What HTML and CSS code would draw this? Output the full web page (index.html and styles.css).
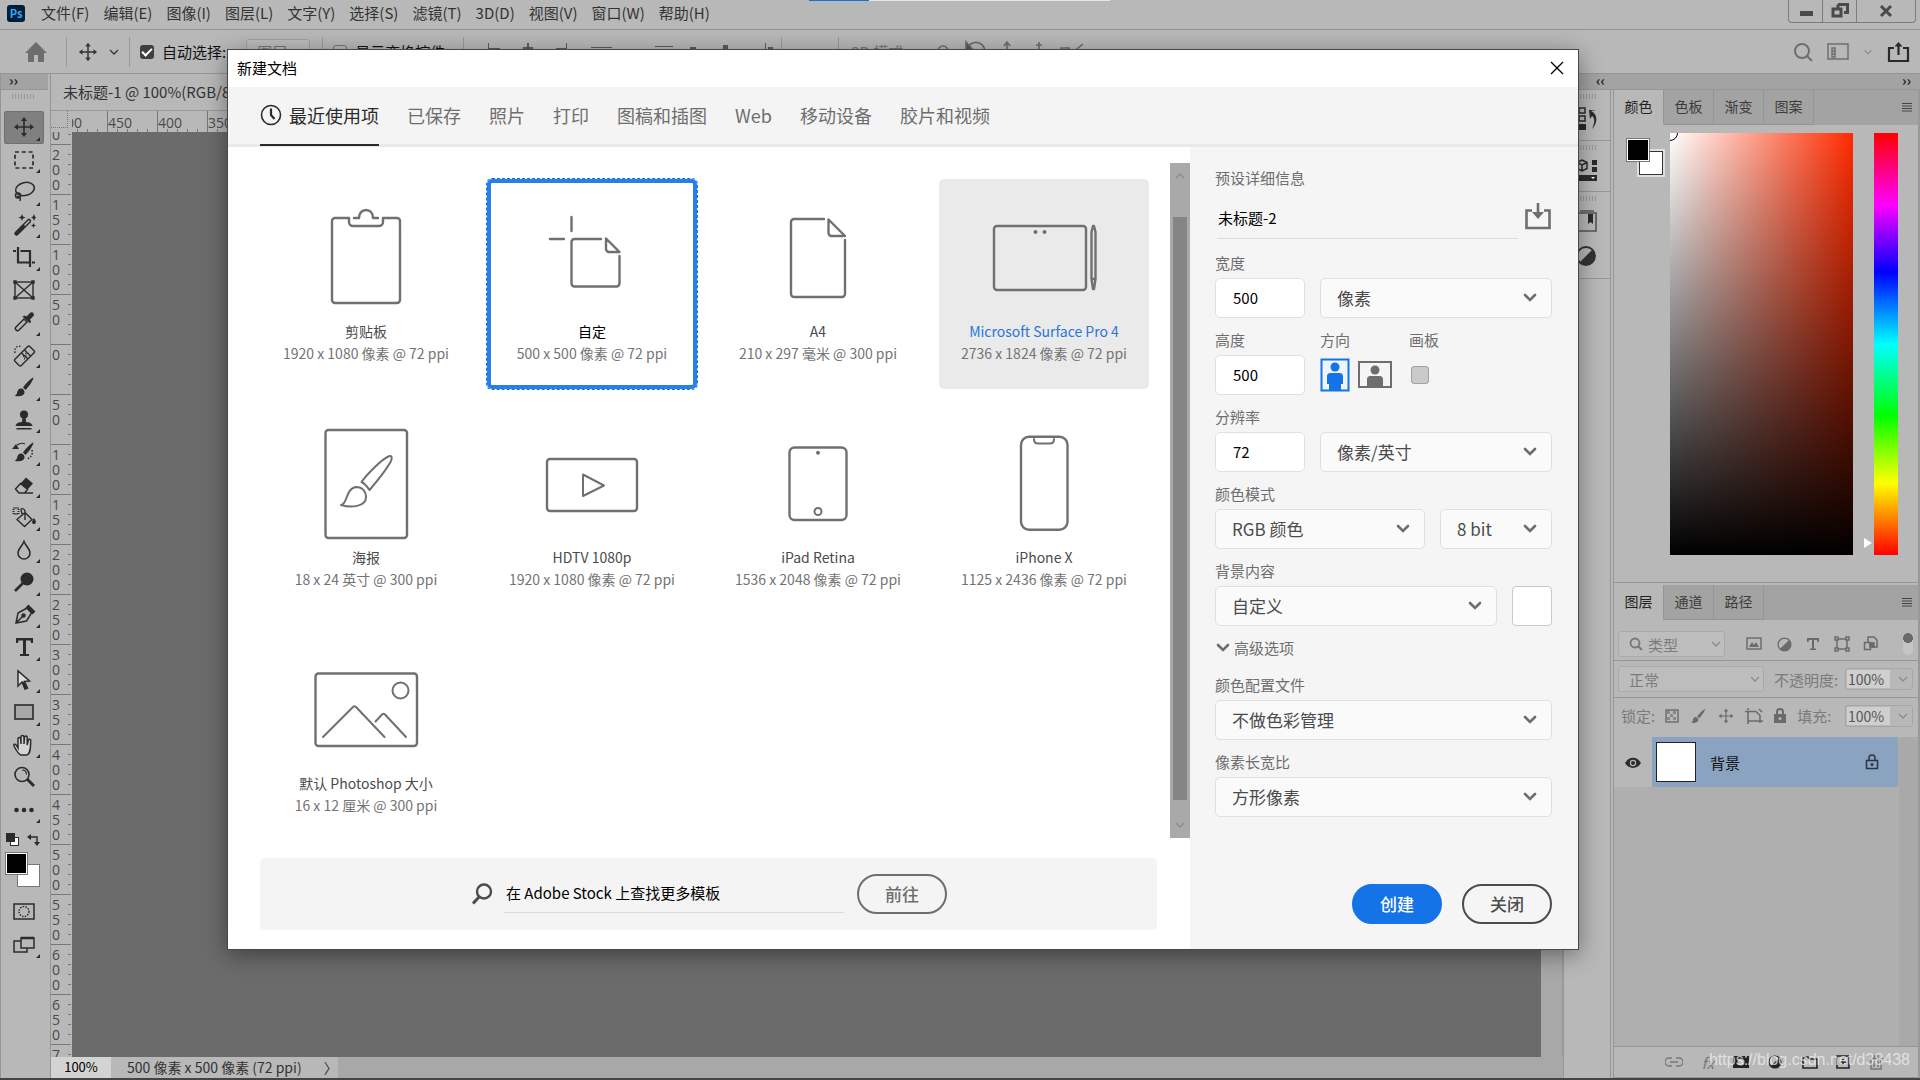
FILE: index.html
```
<!DOCTYPE html>
<html lang="zh-CN">
<head>
  <meta charset="UTF-8">
  <meta name="viewport" content="width=device-width, initial-scale=1.0">
  <title>Photoshop</title>
  <link rel="stylesheet" href="styles.css">
</head>
<body>
  <svg class="defs" aria-hidden="true">
    <symbol id="chev" viewBox="0 0 14 10"><path d="M2 2l5 5 5-5" fill="none" stroke="currentColor" stroke-width="2.6" stroke-linecap="round"/></symbol>
    <symbol id="thin" viewBox="0 0 14 10"><path d="M3 3l4 4 4-4" fill="none" stroke="currentColor" stroke-width="1.3"/></symbol>
    <symbol id="move" viewBox="0 0 24 24"><path d="M12 5v14M5 12h14" stroke="currentColor" stroke-width="1.6"/><path d="M12 2l3 4H9zM12 22l3-4H9zM2 12l4-3v6zM22 12l-4-3v6z" fill="currentColor"/></symbol>
    <symbol id="brush" viewBox="0 0 24 24"><path d="M21.500 2.500c-3 1-8.500 7-10.500 10l2.500 2.500C16.500 12 21 6 21.500 2.500zM10 13.500c-3-.5-4.500 1.500-5 4.500-.3 1.600-1.500 2.400-2.500 2.700 3 1 9 1 10-3 .2-1.700-.8-3.200-2.500-4.200z" fill="currentColor"/></symbol>
    <symbol id="half" viewBox="0 0 24 24"><circle cx="12" cy="12" r="9" fill="none" stroke="currentColor" stroke-width="1.8"/><path d="M18.400 5.600A9 9 0 0 1 5.600 18.400z" fill="currentColor"/></symbol>
    <symbol id="lines" viewBox="0 0 12 10"><path d="M1 1.500h10M1 4h10M1 6.500h10M1 9h10" stroke="currentColor" stroke-width="1"/></symbol>
  </svg>

  <div class="app">
    <div class="load-strip"><i></i></div>
    <header class="menubar">
      <div class="logo">Ps</div>
      <nav class="menus">
        <button>文件(F)</button>
        <button>编辑(E)</button>
        <button>图像(I)</button>
        <button>图层(L)</button>
        <button>文字(Y)</button>
        <button>选择(S)</button>
        <button>滤镜(T)</button>
        <button>3D(D)</button>
        <button>视图(V)</button>
        <button>窗口(W)</button>
        <button>帮助(H)</button>
      </nav>
      <div class="win-buttons">
        <button aria-label="最小化"><svg width="16" height="16"><rect x="2" y="8" width="13" height="5" fill="#4a4a4a"/></svg></button>
        <button aria-label="还原"><svg width="18" height="16"><path d="M7 1.500h9.500v8H13M7 1.500V5" fill="none" stroke="#4a4a4a" stroke-width="3"/><rect x="2" y="6" width="8" height="7" fill="none" stroke="#4a4a4a" stroke-width="3"/></svg></button>
        <button class="win-close" aria-label="关闭窗口"><svg width="16" height="14"><path d="M3 2l10 10M13 2L3 12" stroke="#4a4a4a" stroke-width="3"/></svg></button>
      </div>
    </header>

    <div class="options">
      <svg class="home" width="24" height="22"><path d="M12 1L1 12h3v9h6v-7h4v7h6v-9h3z" fill="#6d6d6d"/></svg>
      <span class="sep"></span>
      <svg width="22" height="22"><use href="#move"/></svg>
      <svg width="14" height="10"><use href="#thin"/></svg>
      <span class="sep"></span>
      <input type="checkbox" id="autoselect" class="check" checked>
      <label for="autoselect" class="auto-label">自动选择:</label>
      <select class="group" aria-label="选择对象"><option>图层</option></select>
      <span class="sep"></span>
      <input type="checkbox" id="transform" class="check off">
      <label for="transform">显示变换控件</label>
      <span class="sep"></span>
      <svg class="aligns" width="290" height="24" fill="#5c5c5c" stroke="none">
        <path d="M5 3h1v18H5zM6 8h11v3H6zM44 3h2v18h-2zM40 7h10v4H40zM83 3h1v18h-1zM73 8h10v3H73zM108 7h21v1h-21zM172 6h18v1h-18zM174 9h5v10h-5zM183 9h5v8h-5zM207 7h6v12h-6zM203 10h16v1h-16zM240 5h5v14h-5zM282 3h1v18h-1zM293 3h1v18h-1zM285 7h5v12h-5z"/>
      </svg>
      <span class="sep"></span>
      <span class="sep far"></span>
      <span class="mode">3D 模式:</span>
      <svg class="orbits" width="160" height="24" fill="none" stroke="#6d6d6d" stroke-width="1.600">
        <circle cx="20" cy="11" r="5"/><path d="M44 10a9 9 0 1 1 4 9"/><path d="M43 2v8h7z" fill="#555"/><circle cx="52" cy="13" r="3"/><path d="M84 2v20M75 12h18M81 6l3-4 3 4M116 2v20M107 12h18M113 5h6M138 8h8v8h-8zM150 12l10-8"/>
      </svg>
      <div class="options-end">
        <svg width="22" height="22" fill="none" stroke="#6f6f6f" stroke-width="2"><circle cx="10" cy="10" r="7"/><path d="M15 15l5 5"/></svg>
        <svg width="22" height="18" fill="none" stroke="#6f6f6f" stroke-width="1.500"><rect x="1" y="1" width="20" height="15"/><path d="M5 5h3v9H5zM5 8h3M5 11h3"/></svg>
        <svg class="dim" width="12" height="10"><use href="#thin"/></svg>
        <svg width="24" height="22" fill="none" stroke="#2a2a2a" stroke-width="2.200"><path d="M7 7H2v13h19V7h-5M11.500 14V3"/><path d="M7.500 5.500l4-4.500 4 4.500z" fill="#2a2a2a" stroke="none"/></svg>
      </div>
    </div>

    <div class="workspace">
      <aside class="tools">
        <div class="band">››</div>
        <div class="grip"></div>
        <div class="tool-list">
          <button class="tool active" aria-label="移动"><svg width="24" height="24"><use href="#move"/></svg></button>
          <button class="tool" aria-label="选框"><svg width="24" height="24"><rect x="3" y="4" width="18" height="16" fill="none" stroke="#2b2b2b" stroke-width="1.700" stroke-dasharray="4 2.800"/></svg></button>
          <button class="tool" aria-label="套索"><svg width="24" height="24" fill="none" stroke="#2b2b2b" stroke-width="1.500"><ellipse cx="13" cy="9" rx="9.500" ry="6.500" transform="rotate(-12 13 9)"/><circle cx="6" cy="15.500" r="2.500"/><path d="M5 16c3 1 4 2.500 3 5"/></svg></button>
          <button class="tool" aria-label="魔棒"><svg width="24" height="24"><path d="M4.500 20.500L17 8" stroke="#2b2b2b" stroke-width="4.500" stroke-linecap="round"/><path d="M13 12l4-4" stroke="#b8b8b8" stroke-width="1.600" stroke-linecap="round"/><path d="M10 1l1 2.500 2.500 1L11 5.500 10 8 9 5.500 6.500 4.500 9 3.500zM22 1l1 2.500 1 1-1 1-1 2.500-1-2.500-2-1 2-1zM21.500 10l.8 1.700 1.700.8-1.700.8-.8 1.700-.8-1.700-1.700-.8 1.700-.8z" fill="#2b2b2b"/></svg></button>
          <button class="tool" aria-label="裁剪"><svg width="24" height="24" fill="none" stroke="#2b2b2b" stroke-width="2.200"><path d="M1 6h3M6 2v15.500h12M8.500 6H18v16M20 17.500h3"/></svg></button>
          <button class="tool plain" aria-label="图框"><svg width="24" height="24" fill="none" stroke="#2b2b2b" stroke-width="1.400"><rect x="3" y="4" width="18" height="16"/><path d="M3 4l18 16M21 4L3 20"/><path d="M2 3h2v2H2zM20 3h2v2h-2zM2 19h2v2H2zM20 19h2v2h-2z" fill="#2b2b2b"/></svg></button>
          <button class="tool" aria-label="吸管"><svg width="24" height="24"><path d="M12 9l3 3-8 8c-2 2-5-1-3-3z" fill="none" stroke="#2b2b2b" stroke-width="1.500"/><path d="M10.500 6.500l2-1 2 1L18 3c2-2 5 1 3.500 3L18 9.500l1 2-1 2z" fill="#2b2b2b"/></svg></button>
          <button class="tool" aria-label="修复画笔"><svg width="24" height="24" fill="none" stroke="#2b2b2b" stroke-width="1.400"><rect x="2" y="8.500" width="21" height="9" rx="1.500" transform="rotate(-45 12.500 13)"/><path d="M9.500 10l6.500 6M12 6.500l6.500 6.500"/><path d="M3 10c-1-6 3-8 7-6" stroke-dasharray="1.500 1.500"/><path d="M11 13h1M13.500 13h1M12 15.500h1M13.500 10.500h1" stroke-width="1.800"/></svg></button>
          <button class="tool" aria-label="画笔"><svg width="24" height="24"><use href="#brush"/></svg></button>
          <button class="tool" aria-label="仿制图章"><svg width="24" height="24" fill="#2b2b2b"><circle cx="12" cy="6.500" r="4"/><path d="M10.500 9h3l.5 5c3 .3 6 1 6.500 4h-17c.5-3 3.500-3.700 6.500-4zM4.500 20h15v1.400h-15z"/></svg></button>
          <button class="tool" aria-label="历史记录画笔"><svg width="24" height="24"><use href="#brush"/><path d="M0 9l4-5 3 5z" fill="#2b2b2b"/><path d="M5 5c3-2 6-2 8-1" fill="none" stroke="#2b2b2b" stroke-width="1.200"/><path d="M20 10c1 5-1 7-5 9" fill="none" stroke="#2b2b2b" stroke-width="1.500" stroke-dasharray="1.500 1.500"/></svg></button>
          <button class="tool" aria-label="橡皮擦"><svg width="24" height="24"><path d="M14 4.500l7 6-5.500 6-7-6z" fill="#2b2b2b"/><path d="M8.500 10.500L3.500 16l3.500 4h5.500l3-3.500zM7 20h14" fill="none" stroke="#2b2b2b" stroke-width="1.500"/></svg></button>
          <button class="tool" aria-label="油漆桶"><svg width="24" height="24" fill="none" stroke="#2b2b2b" stroke-width="1.400"><path d="M5 14.500l8-7 7 7-7.500 7zM13 15V6c-1-3-4-3-4-1l1 4"/><path d="M22 13c3 4 2 6 0 6s-3-2 0-6z" fill="#2b2b2b" stroke="none"/><rect x="1.500" y="3" width="5" height="6" stroke-dasharray="1 1" stroke-width="2"/></svg></button>
          <button class="tool" aria-label="模糊"><svg width="24" height="24" fill="none" stroke="#2b2b2b" stroke-width="1.600"><path d="M12 3.500c1.500 4 6 7.500 6 11.500a6 6 0 0 1-12 0c0-4 4.500-7.500 6-11.500z"/></svg></button>
          <button class="tool" aria-label="减淡"><svg width="24" height="24"><circle cx="15" cy="9" r="6.500" fill="#2b2b2b"/><path d="M11 13l-8 8" stroke="#2b2b2b" stroke-width="2.600"/></svg></button>
          <button class="tool" aria-label="钢笔"><svg width="24" height="24" fill="none" stroke="#2b2b2b" stroke-width="1.500"><path d="M4 20l2-10 9-5 4.500 5-5 8zM4 20l7-7"/><circle cx="11.500" cy="12.500" r="1.500" fill="#2b2b2b"/><path d="M15 3l7 7" stroke-width="4"/></svg></button>
          <button class="tool" aria-label="文字"><svg width="24" height="24" fill="#2b2b2b"><path d="M4 3h17v5h-2l-.5-2.500H14V19h3v2H8v-2h3V5.500H6.500L6 8H4z"/></svg></button>
          <button class="tool" aria-label="路径选择"><svg width="24" height="24"><path d="M6 3v15l4-4 3 7 2.500-1-3-6.500 5-.5z" fill="#ddd" stroke="#2b2b2b" stroke-width="1.500"/><path d="M11 14l3.500 7" stroke="#2b2b2b" stroke-width="2.500"/></svg></button>
          <button class="tool" aria-label="矩形"><svg width="24" height="24"><rect x="3" y="5" width="18" height="14" fill="#a8a8a8" stroke="#2b2b2b" stroke-width="1.600"/></svg></button>
          <button class="tool" aria-label="抓手"><svg width="24" height="24"><path d="M9 22c-3-1-5-5-7-9-1-2 1.500-2.500 2.500-.5L6 15V6c0-2 2.500-2 2.700 0l.3 5V4c0-2 2.700-2 3 0v7l.5-6.500c.2-2 2.700-2 2.700 0V12l1-4.500c.5-2 2.800-1.500 2.500.5C18.500 13 19 22 14 22z" fill="#d5d5d5" stroke="#2b2b2b" stroke-width="1.500"/></svg></button>
          <button class="tool plain" aria-label="缩放"><svg width="24" height="24" fill="none" stroke="#2b2b2b"><circle cx="10" cy="9.500" r="7" stroke-width="1.600"/><path d="M10 5c3 0 4.500 2 4.500 4.500" stroke-width="1.200"/><path d="M15 14l7 7" stroke-width="3"/></svg></button>
          <button class="tool" aria-label="编辑工具栏"><svg width="24" height="24" fill="#2b2b2b"><circle cx="4.500" cy="12" r="2.300"/><circle cx="12" cy="12" r="2.300"/><circle cx="19.500" cy="12" r="2.300"/></svg></button>
        </div>
        <div class="color-mini">
          <svg width="14" height="14"><rect x="4.500" y="4.500" width="8" height="8" fill="#fff" stroke="#2b2b2b"/><rect width="9" height="9" fill="#2b2b2b"/></svg>
          <svg width="14" height="14"><path d="M3 4h7v7" fill="none" stroke="#2b2b2b" stroke-width="1.400"/><path d="M0 4l4-3v6zM10 13l-3-4h6z" fill="#2b2b2b"/></svg>
        </div>
        <div class="swatches"><i class="back"></i><i class="front"></i></div>
        <button class="tool mask" aria-label="快速蒙版"><svg width="24" height="20" fill="none" stroke="#2b2b2b"><rect x="2" y="2" width="20" height="15" stroke-width="1.500"/><circle cx="12" cy="9.500" r="5" stroke-width="1.400" stroke-dasharray="1.500 1.200"/></svg></button>
        <button class="tool screen" aria-label="屏幕模式"><svg width="24" height="20" fill="#b8b8b8" stroke="#2b2b2b" stroke-width="1.500"><rect x="2" y="6" width="13" height="11"/><rect x="9" y="3" width="13" height="10"/><path d="M9 3h13" stroke-width="2.500"/></svg></button>
      </aside>

      <main class="doc">
        <div class="doc-tabs"><span>未标题-1 @ 100%(RGB/8</span></div>
        <div class="ruler-row">
          <div class="ruler-corner"></div>
          <div class="ruler-h"><span>500</span><span>450</span><span>400</span><span>350</span></div>
        </div>
        <div class="canvas-row">
          <div class="ruler-v">
            <span class="first">250</span><span>200</span><span>150</span><span>100</span><span>50</span><span>0</span><span>50</span><span>100</span><span>150</span><span>200</span><span>250</span><span>300</span><span>350</span><span>400</span><span>450</span><span>500</span><span>550</span><span>600</span><span>650</span><span>7</span>
          </div>
          <div class="canvas"></div>
          <div class="vscroll"></div>
        </div>
        <div class="status">
          <span class="zoom">100%</span>
          <span class="size">500 像素 x 500 像素 (72 ppi)</span>
          <span class="more">〉</span>
          <div class="hscroll"></div>
        </div>
      </main>

      <div class="right">
        <div class="band right-band"><span>‹‹</span><span>››</span></div>
        <div class="right-cols">
          <aside class="dock">
            <div class="dock-cell">
              <div class="grip"></div>
              <svg width="26" height="24"><path d="M5 1h6v5H5zM5 9h6v5H5z" fill="none" stroke="#2b2b2b" stroke-width="1.500"/><path d="M4 17h8v6H4z" fill="#2b2b2b"/><path d="M17 4c7 3 7 12 1 18 3-7 3-11 0-13l-2 3-1-9h7z" fill="#2b2b2b"/></svg>
            </div>
            <div class="dock-cell">
              <div class="grip"></div>
              <svg width="26" height="24"><path d="M8 2l5 2.500v6L8 13l-5-2.500v-6zM3 4.500L8 7l5-2.500M8 7v6" fill="none" stroke="#2b2b2b" stroke-width="1.500"/><path d="M18 2h5v5h-5zM18 9h5v5h-5zM2 17h21v6H2z" fill="#2b2b2b"/><path d="M17 19h4l-2 2z" fill="#fff"/></svg>
            </div>
            <div class="dock-cell tall">
              <div class="grip"></div>
              <svg width="26" height="24"><path d="M4 4h18v18H4zM6 2h14" fill="none" stroke="#555" stroke-width="1.600"/><path d="M14 5h5v10l-2.500-2-2.500 2z" fill="#2b2b2b"/></svg>
              <svg class="contrast" width="24" height="24"><use href="#half"/></svg>
            </div>
          </aside>

          <div class="panels">
            <section class="panel color-panel">
              <div class="tabs">
                <button class="tab on">颜色</button>
                <button class="tab">色板</button>
                <button class="tab">渐变</button>
                <button class="tab">图案</button>
                <svg width="12" height="10"><use href="#lines"/></svg>
              </div>
              <div class="picker">
                <div class="swatches"><i class="back"></i><i class="front"></i></div>
                <div class="field"><i class="ring"></i></div>
                <div class="hue"><i class="marker"></i></div>
              </div>
            </section>

            <section class="panel layers-panel">
              <div class="tabs">
                <button class="tab on">图层</button>
                <button class="tab">通道</button>
                <button class="tab">路径</button>
                <svg width="12" height="10"><use href="#lines"/></svg>
              </div>
              <div class="row filter-row">
                <div class="mini-select filter">
                  <svg class="find" width="14" height="14" fill="none" stroke="#777" stroke-width="1.800"><circle cx="6" cy="6" r="4.500"/><path d="M9 9l4 4"/></svg>
                  <select aria-label="图层过滤"><option>类型</option></select>
                  <svg class="arrow" width="14" height="10"><use href="#thin"/></svg>
                </div>
                <div class="filter-icons">
                  <svg width="16" height="14"><rect x="1" y="1" width="14" height="11" fill="none" stroke="#6a6a6a" stroke-width="1.400"/><path d="M3 10l3-5 2 3 2-3 3 5z" fill="#6a6a6a"/></svg>
                  <svg width="17" height="17"><use href="#half"/></svg>
                  <svg width="14" height="14"><path d="M1 1h12v4h-1.500L11 3H8v8.500h2V13H4v-1.500h2V3H3l-.5 2H1z" fill="#6a6a6a"/></svg>
                  <svg width="16" height="16" fill="none" stroke="#6a6a6a" stroke-width="1.500"><rect x="3" y="3" width="10" height="10"/><path d="M1 1h3v3H1zM12 1h3v3h-3zM1 12h3v3H1zM12 12h3v3h-3z" fill="#b8b8b8"/></svg>
                  <svg width="16" height="16" fill="none" stroke="#6a6a6a" stroke-width="1.500"><path d="M5 6V1h6l3 3v7H9M1.500 6.500h6v7h-6zM8 8h3"/><path d="M7 7h4v4H7z" fill="#6a6a6a"/></svg>
                </div>
                <span class="toggle"></span>
              </div>
              <div class="row">
                <div class="mini-select blend">
                  <select aria-label="混合模式"><option>正常</option></select>
                  <svg class="arrow" width="14" height="10"><use href="#thin"/></svg>
                </div>
                <label for="opacity">不透明度:</label>
                <div class="num"><input id="opacity" type="text" value="100%"><svg width="14" height="10"><use href="#thin"/></svg></div>
              </div>
              <div class="row lock-row">
                <span class="lock-label">锁定:</span>
                <svg width="14" height="14"><rect x="1" y="1" width="12" height="12" fill="none" stroke="#6a6a6a" stroke-width="1.400"/><path d="M2 2h3v3H2zM8 2h3v3H8zM5 5h3v3H5zM2 8h3v3H2zM8 8h3v3H8z" fill="#888"/></svg>
                <svg width="18" height="18"><use href="#brush"/></svg>
                <svg width="18" height="18"><use href="#move"/></svg>
                <svg width="18" height="16" fill="none" stroke="#6a6a6a" stroke-width="1.500"><path d="M3 0v2M0 3.500h11l4 4V13H3V3.500M15 15v-2h3M3 13v3M14 1l3 3"/></svg>
                <svg width="14" height="16"><path d="M1 6h12v9H1z" fill="#6a6a6a"/><path d="M4 7V4a3 3 0 0 1 6 0v3" fill="none" stroke="#6a6a6a" stroke-width="2"/><circle cx="7" cy="10.500" r="1.500" fill="#b8b8b8"/></svg>
                <label for="fill">填充:</label>
                <div class="num"><input id="fill" type="text" value="100%"><svg width="14" height="10"><use href="#thin"/></svg></div>
              </div>
              <div class="layer-list">
                <div class="layer">
                  <div class="eye"><svg width="16" height="12"><path d="M0 6c4-7 12-7 16 0-4 6.500-12 6.500-16 0z" fill="#2b2b2b"/><circle cx="8" cy="6" r="3.200" fill="#b8b8b8"/><circle cx="8" cy="6" r="2" fill="#2b2b2b"/></svg></div>
                  <div class="layer-body">
                    <i class="thumb"></i>
                    <span>背景</span>
                    <svg width="14" height="16" fill="none" stroke="#2b3644" stroke-width="1.500"><rect x="1.500" y="6.500" width="11" height="8"/><path d="M4 6.500V4a3 3 0 0 1 6 0v2.500"/><circle cx="7" cy="10.500" r=".8"/></svg>
                  </div>
                </div>
              </div>
              <div class="layer-actions">
                <svg width="18" height="10" fill="none" stroke="#777" stroke-width="1.500"><path d="M7 1H4a4 4 0 0 0 0 8h3M11 1h3a4 4 0 0 1 0 8h-3M5 5h8"/></svg>
                <span class="fx">fx</span>
                <svg width="16" height="12"><path d="M0 0h16v12H0z" fill="#222"/><circle cx="8" cy="6" r="3.500" fill="#b8b8b8"/></svg>
                <svg class="dark" width="16" height="16"><use href="#half"/></svg>
                <svg width="16" height="13" fill="none" stroke="#222" stroke-width="1.600"><path d="M1 12V1h5l1.500 2H15v9z"/></svg>
                <svg width="14" height="14" fill="none" stroke="#222" stroke-width="1.600"><path d="M1 1h12v12H1zM7 4v6M4 7h6"/></svg>
                <svg width="14" height="15" fill="none" stroke="#777" stroke-width="1.500"><path d="M0 3.500h14M2 4v10h10V4M5 3V1h4v2M5 6v6M9 6v6"/></svg>
              </div>
            </section>
          </div>
        </div>
      </div>
    </div>
    <footer class="edge"></footer>
    <div class="watermark">https://blog.csdn.net/d38438</div>

    <div class="dialog" role="dialog" aria-label="新建文档">
      <div class="dialog-title">
        <span>新建文档</span>
        <button aria-label="关闭对话框"><svg width="14" height="14"><path d="M1 1l12 12M13 1L1 13" stroke="#000" stroke-width="1.300"/></svg></button>
      </div>
      <nav class="dialog-tabs">
        <button class="current"><svg width="22" height="22" fill="none" stroke="#2b2b2b"><circle cx="11" cy="11" r="9.500" stroke-width="1.600"/><path d="M11 4.500V11l3.500 4" stroke-width="2.200"/></svg>最近使用项</button>
        <button>已保存</button>
        <button>照片</button>
        <button>打印</button>
        <button>图稿和插图</button>
        <button>Web</button>
        <button>移动设备</button>
        <button>胶片和视频</button>
      </nav>
      <div class="dialog-body">
        <div class="browse">
          <div class="presets-wrap">
            <div class="presets">
              <button class="preset">
                <svg width="210" height="120"><path d="M88 20H74a3 3 0 0 0-3 3v79a3 3 0 0 0 3 3h62a3 3 0 0 0 3-3V23a3 3 0 0 0-3-3h-14v4a4 4 0 0 1-4 4H92a4 4 0 0 1-4-4z"/><path d="M93 20h5c0-5 3-8 7-8s7 3 7 8h5"/></svg>
                <b>剪贴板</b><small>1920 x 1080 像素 @ 72 ppi</small>
              </button>
              <button class="preset selected">
                <svg width="210" height="120"><path d="M84.500 19v14M63 41h14M114 41H87.500a3 3 0 0 0-3 3v41.500a3 3 0 0 0 3 3h42a3 3 0 0 0 3-3V58M119 40.500L132.500 54H122a3 3 0 0 1-3-3z"/></svg>
                <b>自定</b><small>500 x 500 像素 @ 72 ppi</small>
              </button>
              <button class="preset">
                <svg width="210" height="120"><path d="M111 21H81a3 3 0 0 0-3 3v72a3 3 0 0 0 3 3h48a3 3 0 0 0 3-3V42M115.500 21.500L132 38h-13.500a3 3 0 0 1-3-3z"/></svg>
                <b>A4</b><small>210 x 297 毫米 @ 300 ppi</small>
              </button>
              <button class="preset hovered">
                <svg width="210" height="120"><rect x="55" y="28" width="92" height="64" rx="3"/><circle cx="96.500" cy="34" r="2" class="solid"/><circle cx="105.500" cy="34" r="2" class="solid"/><path d="M152.500 34l1.500-6h1l1.500 6v47l-1.500 10h-1l-1.500-10zM152.500 81h4"/></svg>
                <b>Microsoft Surface Pro 4</b><small>2736 x 1824 像素 @ 72 ppi</small>
              </button>
              <button class="preset">
                <svg width="210" height="120"><rect x="64.500" y="6" width="81.500" height="108" rx="3"/><path class="fine" d="M100.500 58c5-7 20-23 28-26 3-.5 2.500 3 1 6-5 9-15 21-21 28-2-3-4-6-8-8zM80 81c7-1 4-16 15-18 7 0 10 5 10 10 0 10-15 11-25 8z"/></svg>
                <b>海报</b><small>18 x 24 英寸 @ 300 ppi</small>
              </button>
              <button class="preset">
                <svg width="210" height="120"><rect x="60" y="35" width="90" height="52" rx="3"/><path class="fine" d="M96 50.500l21 11-21 10.500z"/></svg>
                <b>HDTV 1080p</b><small>1920 x 1080 像素 @ 72 ppi</small>
              </button>
              <button class="preset">
                <svg width="210" height="120"><rect x="76.500" y="23.500" width="57" height="72.500" rx="5"/><circle cx="105" cy="28.700" r="2" class="solid"/><circle cx="105" cy="87.500" r="3.500" class="fine"/></svg>
                <b>iPad Retina</b><small>1536 x 2048 像素 @ 72 ppi</small>
              </button>
              <button class="preset">
                <svg width="210" height="120"><rect x="82" y="12.700" width="46.500" height="93" rx="8"/><path class="fine" d="M95 15c0 3 1 4.500 4 4.500h12c3 0 4-1.500 4-4.500"/></svg>
                <b>iPhone X</b><small>1125 x 2436 像素 @ 72 ppi</small>
              </button>
              <button class="preset">
                <svg width="210" height="120"><rect x="54.500" y="23.500" width="101.500" height="72.500" rx="3"/><circle cx="139.500" cy="40.500" r="8" class="fine"/><path class="fine" d="M62 87l30-30q1.500-1.500 3 0l28.500 30M114.500 71.500l6.500-7q1.500-1.500 3 0L145 87"/></svg>
                <b>默认 Photoshop 大小</b><small>16 x 12 厘米 @ 300 ppi</small>
              </button>
            </div>
            <div class="scrollbar">
              <svg class="up" width="14" height="10"><use href="#thin"/></svg>
              <i class="knob"></i>
              <svg width="14" height="10"><use href="#thin"/></svg>
            </div>
          </div>
          <form class="stock">
            <svg width="24" height="24" fill="none" stroke="#4b4b4b"><circle cx="14" cy="9.500" r="7" stroke-width="2.400"/><path d="M9 15l-6 6.500" stroke-width="3"/></svg>
            <input type="text" aria-label="搜索模板" value="在 Adobe Stock 上查找更多模板">
            <button type="button">前往</button>
          </form>
        </div>

        <form class="details">
          <div class="details-title">预设详细信息</div>
          <div class="name-row">
            <input type="text" aria-label="名称" value="未标题-2">
            <button type="button" aria-label="保存预设"><svg width="28" height="28" fill="none" stroke="#6e6e6e" stroke-width="2.600"><path d="M8 8.500H2.500V26h23V8.500H20M14 1v10"/><path d="M8 10h12l-6 7z" fill="#6e6e6e" stroke="none"/></svg></button>
          </div>
          <div class="fields">
            <div class="line">
              <div class="cell short"><label for="width">宽度</label><input id="width" type="text" value="500"></div>
              <div class="cell wide"><div class="pick"><select aria-label="单位"><option>像素</option></select><svg width="14" height="10"><use href="#chev"/></svg></div></div>
            </div>
            <div class="line">
              <div class="cell short"><label for="height">高度</label><input id="height" type="text" value="500"></div>
              <div class="cell direction"><span>方向</span>
                <div class="ways">
                  <button type="button" aria-label="纵向"><svg width="30" height="34"><rect x="1.500" y="1.500" width="27" height="31" fill="#eef4fc" stroke="#1473e6" stroke-width="2"/><circle cx="15" cy="9" r="4.500" fill="#1473e6"/><path d="M7 19c0-3 1-4 4-4h8c3 0 4 1 4 4v7h-2v7H9v-7H7z" fill="#1473e6"/></svg></button>
                  <button type="button" aria-label="横向"><svg width="34" height="28"><rect x="1" y="1" width="32" height="25" fill="none" stroke="#6e6e6e" stroke-width="2"/><circle cx="17" cy="9" r="4.500" fill="#6e6e6e"/><path d="M9 26v-7c0-3 1-4 4-4h8c3 0 4 1 4 4v7z" fill="#6e6e6e"/></svg></button>
                </div>
              </div>
              <div class="cell artboard"><label for="artboard">画板</label><input id="artboard" type="checkbox"></div>
            </div>
            <div class="line">
              <div class="cell short"><label for="res">分辨率</label><input id="res" type="text" value="72"></div>
              <div class="cell wide"><div class="pick"><select aria-label="分辨率单位"><option>像素/英寸</option></select><svg width="14" height="10"><use href="#chev"/></svg></div></div>
            </div>
            <div class="line">
              <div class="cell wide"><label for="mode">颜色模式</label><div class="pick"><select id="mode"><option>RGB 颜色</option></select><svg width="14" height="10"><use href="#chev"/></svg></div></div>
              <div class="cell bits"><div class="pick"><select aria-label="位深度"><option>8 bit</option></select><svg width="14" height="10"><use href="#chev"/></svg></div></div>
            </div>
            <div class="line">
              <div class="cell wide"><label for="bg">背景内容</label><div class="pick"><select id="bg"><option>自定义</option></select><svg width="14" height="10"><use href="#chev"/></svg></div></div>
              <button type="button" class="bg-color" aria-label="背景颜色"></button>
            </div>
            <button type="button" class="advanced"><svg width="14" height="10"><use href="#chev"/></svg>高级选项</button>
            <div class="cell"><label for="profile">颜色配置文件</label><div class="pick"><select id="profile"><option>不做色彩管理</option></select><svg width="14" height="10"><use href="#chev"/></svg></div></div>
            <div class="cell"><label for="ratio">像素长宽比</label><div class="pick"><select id="ratio"><option>方形像素</option></select><svg width="14" height="10"><use href="#chev"/></svg></div></div>
          </div>
          <div class="actions">
            <button type="button" class="create">创建</button>
            <button type="button" class="close">关闭</button>
          </div>
        </form>
      </div>
    </div>
  </div>
</body>
</html>
```

FILE: styles.css
```
* {
  box-sizing: border-box;
}
body {
  margin: 0;
  background: #b8b8b8;
  color: #333;
  font-family: "Noto Sans CJK SC", sans-serif;
  font-size: 15px;
  overflow: hidden;
}
button {
  padding: 0;
  border: 0;
  background: none;
  font: inherit;
  color: inherit;
}
input, select {
  margin: 0;
  font: inherit;
  color: inherit;
  border-radius: 0;
}
select {
  appearance: none;
}
svg {
  display: block;
  flex: none;
}
.defs {
  position: absolute;
  width: 0;
  height: 0;
}
.app {
  position: relative;
  display: flex;
  flex-direction: column;
  height: 100vh;
}
.load-strip {
  position: absolute;
  top: 0;
  left: 809px;
  width: 301px;
  height: 1px;
  background: #e6e6e6;
}
.load-strip i {
  display: block;
  width: 60px;
  height: 1px;
  background: #0b78d7;
}

/* menu bar */
.menubar {
  display: flex;
  align-items: flex-start;
  height: 30px;
  padding-left: 7px;
  border-bottom: 1px solid #929292;
}
.logo {
  width: 18px;
  height: 17px;
  margin-top: 5px;
  border-radius: 3px;
  background: #001e36;
  color: #31a8ff;
  font-size: 11px;
  font-weight: bold;
  line-height: 16px;
  text-align: center;
}
.menus {
  display: flex;
  gap: 14px;
  margin-left: 16px;
  line-height: 26px;
}
.win-buttons {
  display: flex;
  margin: 0 4px 0 auto;
  border: 1px solid #7d7d7d;
  border-top: 0;
  border-radius: 0 0 4px 4px;
}
.win-buttons button {
  display: flex;
  align-items: center;
  justify-content: center;
  width: 34px;
  height: 22px;
  border-right: 1px solid #7d7d7d;
}
.win-buttons .win-close {
  width: 58px;
  border-right: 0;
}

/* options bar */
.options {
  display: flex;
  align-items: center;
  height: 44px;
  padding: 0 9px 0 24px;
  border-bottom: 1px solid #969696;
  white-space: nowrap;
}
.sep {
  width: 1px;
  height: 30px;
  margin: 0 10px 0 18px;
  background: #999;
}
.options svg + svg {
  margin-left: 8px;
}
.options svg + .sep {
  margin-left: 8px;
}
.options .home + .sep {
  margin: 0 10px 0 18px;
}
.check {
  appearance: none;
  width: 14px;
  height: 14px;
  margin-right: 8px;
  border-radius: 3px;
  background: #3f3f3f;
}
.check:checked::after {
  content: "";
  display: block;
  width: 4px;
  height: 8px;
  margin: 1px 4px;
  border: solid #fff;
  border-width: 0 2px 2px 0;
  transform: rotate(45deg);
}
.check.off {
  background: none;
  border: 1px solid #777;
}
.options label {
  color: #111;
}
.group {
  width: 64px;
  height: 26px;
  margin-left: 20px;
  padding: 0 10px;
  border: 1px solid #a0a0a0;
  border-radius: 3px;
  background: #bcbcbc;
  color: #777;
}
.group + .sep {
  margin-left: 12px;
}
.options .aligns {
  margin: 0 0 0 9px;
}
.options .far {
  margin-left: 46px;
}
.mode {
  margin: 0 16px 0 2px;
  color: #777;
}
.options-end {
  display: flex;
  align-items: center;
  gap: 13px;
  margin-left: auto;
}
.options .options-end svg {
  margin: 0;
}
.dim {
  color: #888;
}

/* workspace */
.workspace {
  flex: 1;
  display: flex;
  min-height: 0;
}
.band {
  height: 16px;
  padding-left: 8px;
  background: #a3a3a3;
  border-bottom: 1px solid #969696;
  color: #222;
  font-size: 14px;
  font-weight: bold;
  line-height: 12px;
}
.grip {
  width: 24px;
  height: 5px;
  background: repeating-linear-gradient(90deg, #999 0 1px, #b8b8b8 1px 3px);
}
.tools {
  width: 48px;
  flex: none;
  border-left: 1px solid #969696;
}
.tools .grip {
  margin: 4px 0 12px 11px;
}
.tool-list {
  display: flex;
  flex-direction: column;
  height: 715px;
}
.tool {
  position: relative;
  flex: 1;
  display: flex;
  align-items: center;
  justify-content: center;
  width: 40px;
  margin-left: 3px;
  border-radius: 3px;
  color: #2b2b2b;
}
.tool::after {
  content: "";
  position: absolute;
  right: 4px;
  bottom: 3px;
  border: 2px solid #2b2b2b;
  border-top-color: transparent;
  border-left-color: transparent;
}
.plain::after,
.mask::after {
  display: none;
}
.active {
  background: #808080;
  box-shadow: inset 0 0 0 1px #707070;
}
.color-mini {
  display: flex;
  justify-content: space-between;
  padding: 7px 7px 0 5px;
}
.swatches {
  position: relative;
  width: 35px;
  height: 35px;
  margin: 5px 0 0 4px;
}
.swatches i {
  position: absolute;
  width: 23px;
  height: 23px;
  border: 1px solid #777;
}
.back {
  right: 0;
  bottom: 0;
  background: #fff;
}
.front {
  left: 0;
  top: 0;
  background: #000;
  box-shadow: inset 0 0 0 1px #fff;
}
.mask, .screen {
  height: 33px;
}
.mask {
  margin-top: 8px;
}

/* document window */
.doc {
  flex: 1;
  display: flex;
  flex-direction: column;
  min-width: 0;
  margin-left: 2px;
  border-left: 1px solid #969696;
}
.doc-tabs {
  height: 37px;
  padding-left: 12px;
  border-bottom: 1px solid #989898;
  background: linear-gradient(90deg, #b8b8b8 50%, #a3a3a3 50%);
  line-height: 35px;
}
.ruler-row {
  display: flex;
  height: 21px;
}
.ruler-corner {
  width: 17px;
  margin-right: 4px;
  border-right: 1px dotted #777;
  border-bottom: 1px dotted #777;
  height: 17px;
}
.ruler-h {
  flex: 1;
  display: flex;
  overflow: hidden;
  color: #4a4a4a;
  font-family: "Open Sans", sans-serif;
  font-size: 14px;
  line-height: 24px;
}
.ruler-h span {
  flex: none;
  width: 50px;
  border-left: 1px solid #777;
  background: repeating-linear-gradient(90deg, transparent 0 9px, #777 9px 10px) 0 100% / 100% 3px no-repeat;
}
.ruler-h span:first-child {
  margin-left: -15px;
}
.canvas-row {
  flex: 1;
  display: flex;
  min-height: 0;
}
.ruler-v {
  width: 21px;
  overflow: hidden;
  color: #4a4a4a;
  font-family: "Open Sans", sans-serif;
  font-size: 14px;
  line-height: 15px;
}
.ruler-v span {
  display: block;
  width: 20px;
  height: 50px;
  padding: 2px 10px 0 1px;
  border-top: 1px solid #777;
  background: repeating-linear-gradient(transparent 0 9px, #777 9px 10px) 100% 0 / 3px 100% no-repeat;
  word-break: break-all;
}
.ruler-v .first {
  margin-top: -38px;
}
.canvas {
  flex: 1;
  background: #6b6b6b;
}
.vscroll {
  width: 22px;
  background: #a8a8a8;
  border-right: 1px solid #999;
}
.status {
  display: flex;
  height: 21px;
  line-height: 20px;
}
.zoom {
  width: 60px;
  background: #d3d3d3;
  color: #000;
  font-size: 13px;
  text-align: center;
}
.size {
  padding-left: 16px;
  font-size: 14px;
}
.more {
  padding: 0 0 0 22px;
  font-size: 14px;
}
.hscroll {
  flex: 1;
  background: #a8a8a8;
}

/* right side */
.right {
  width: 357px;
  flex: none;
  display: flex;
  flex-direction: column;
  border-left: 1px solid #999;
}
.right-band {
  display: flex;
  justify-content: space-between;
  padding: 0 9px 0 32px;
}
.right-cols {
  flex: 1;
  display: flex;
  min-height: 0;
}
.dock {
  width: 47px;
  border-right: 1px solid #969696;
}
.dock-cell {
  height: 51px;
  padding: 4px 10px;
  border-bottom: 1px solid #969696;
}
.dock-cell svg {
  margin-top: 8px;
}
.dock-cell .contrast {
  margin-top: 11px;
}
.tall {
  height: 87px;
}
.panels {
  flex: 1;
  display: flex;
  flex-direction: column;
  gap: 2px;
  margin-left: 2px;
  border-left: 1px solid #969696;
  border-right: 2px solid #999;
}
.panel {
  border-bottom: 1px solid #969696;
}
.tabs {
  display: flex;
  height: 35px;
  background: #a3a3a3;
  font-size: 14px;
}
.tab {
  width: 50px;
  padding-bottom: 3px;
  border-right: 1px solid #959595;
  border-bottom: 1px solid #959595;
  color: #3c3c3c;
}
.tab.on {
  background: #b8b8b8;
  border-bottom-color: #b8b8b8;
  color: #222;
}
.tabs svg {
  margin: 12px 5px 0 auto;
  color: #444;
}
.color-panel {
  height: 493px;
}
.picker {
  display: flex;
  padding: 8px 20px 0 12px;
}
.picker .swatches {
  width: 38px;
  height: 38px;
  margin: 5px 6px 0 0;
}
.picker .swatches i {
  width: 24px;
  height: 24px;
}
.picker .swatches .back {
  border: 1px solid #333;
  outline: 2px solid #e0e0e0;
  margin: 1px;
}
.field {
  flex: 1;
  height: 422px;
  overflow: hidden;
  background: linear-gradient(transparent, #000), linear-gradient(90deg, #fff, #ff2b00);
}
.ring {
  display: block;
  width: 16px;
  height: 16px;
  margin: -8px;
  border: 1px solid #000;
  border-radius: 50%;
}
.hue {
  position: relative;
  width: 24px;
  margin-left: 21px;
  background: linear-gradient(#f00, #f0f 17%, #00f 33%, #0ff 50%, #0f0 67%, #ff0 83%, #f00);
}
.marker {
  position: absolute;
  left: -10px;
  bottom: 7px;
  border: 5px solid transparent;
  border-left: 8px solid #fff;
  border-right: 0;
}
.layers-panel {
  flex: 1;
  display: flex;
  flex-direction: column;
}
.row {
  display: flex;
  align-items: center;
  height: 37px;
  padding: 0 4px;
  border-bottom: 1px solid #969696;
  color: #7b7b7b;
  white-space: nowrap;
}
.filter-row {
  height: 41px;
  padding-top: 8px;
}
.mini-select {
  display: flex;
  align-items: center;
  height: 26px;
  padding: 0 1px 0 10px;
  border: 1px solid #aaa;
  border-radius: 3px;
  background: #bdbdbd;
}
.mini-select select {
  flex: 1;
  min-width: 0;
  padding: 0;
  border: 0;
  background: none;
}
.filter {
  width: 107px;
}
.find {
  margin-right: 5px;
}
.blend {
  width: 146px;
}
.arrow,
.num svg {
  color: #8c8c8c;
}
.filter-icons {
  flex: 1;
  display: flex;
  align-items: center;
  justify-content: space-between;
  margin: 0 24px 0 21px;
  color: #6a6a6a;
}
.toggle {
  width: 10px;
  height: 22px;
  margin-right: 1px;
  border-radius: 5px;
  background: radial-gradient(circle at 5px 5px, #6a6a6a 5px, #c4c4c4 5px);
}
.row label {
  margin-left: 10px;
}
.num {
  flex: none;
  display: flex;
  align-items: center;
  width: 68px;
  height: 22px;
  margin: 0 1px 0 auto;
  border: 1px solid #a6a6a6;
  border-radius: 3px;
}
.num input {
  width: 43px;
  height: 18px;
  margin: 0 6px 0 1px;
  padding: 0 0 0 1px;
  border: 0;
  background: #cfcfcf;
  color: #555;
  font-size: 14px;
}
.lock-row {
  height: 39px;
  padding: 0 4px 4px 7px;
  gap: 10px;
  border-bottom: 0;
  color: #6a6a6a;
}
.lock-row .lock-label,
.lock-row label {
  margin: 0;
  color: #7b7b7b;
}
.lock-row .num {
  margin-left: auto;
}
.layer-list {
  flex: 1;
  background: linear-gradient(90deg, #afafaf 285px, #a9a9a9 285px);
}
.layer {
  display: flex;
  height: 50px;
  margin-right: 20px;
}
.eye {
  width: 38px;
  padding: 20px 11px;
  background: #b8b8b8;
}
.layer-body {
  flex: 1;
  display: flex;
  align-items: center;
  gap: 14px;
  padding: 0 19px 0 4px;
  background: #8aa3c1;
  color: #111;
}
.layer-body svg {
  margin-left: auto;
}
.thumb {
  width: 40px;
  height: 40px;
  border: 1px solid #222;
  background: #fff;
}
.layer-actions {
  display: flex;
  align-items: center;
  justify-content: space-between;
  height: 31px;
  padding: 0 35px 0 51px;
  border-top: 1px solid #969696;
}
.fx {
  color: #777;
  font-style: italic;
}
.dark {
  color: #222;
}
.edge {
  height: 2px;
  background: #444;
}
.watermark {
  position: absolute;
  right: 10px;
  bottom: 10px;
  color: rgba(240, 240, 240, .75);
  font-family: "Liberation Sans", sans-serif;
  font-size: 16px;
  line-height: 20px;
}

/* new document dialog */
.dialog {
  position: absolute;
  inset: 49px 341px 130px 227px;
  display: flex;
  flex-direction: column;
  border: 1px solid #484848;
  background: #fff;
  box-shadow: 0 5px 22px rgba(0, 0, 0, .4);
}
.dialog-title {
  display: flex;
  align-items: center;
  justify-content: space-between;
  height: 37px;
  padding: 0 14px 2px 9px;
  color: #000;
}
.dialog-tabs {
  display: flex;
  gap: 28px;
  height: 60px;
  padding-left: 32px;
  border-bottom: 3px solid #e9e9e9;
  background: #f4f4f4;
  color: #6e6e6e;
  font-size: 18px;
}
.dialog-tabs button {
  padding-bottom: 2px;
}
.dialog-tabs .current {
  display: flex;
  align-items: center;
  gap: 7px;
  margin-bottom: -2px;
  border-bottom: 2px solid #2b2b2b;
  color: #2b2b2b;
}
.dialog-body {
  flex: 1;
  display: flex;
  min-height: 0;
}
.browse {
  flex: 1;
  display: flex;
  flex-direction: column;
}
.presets-wrap {
  flex: 1;
  display: flex;
  min-height: 0;
  padding-top: 16px;
}
.presets {
  flex: 1;
  display: grid;
  grid-template-columns: repeat(auto-fill, 210px);
  align-content: start;
  gap: 16px;
  padding: 16px 0 0 33px;
}
.preset {
  display: flex;
  flex-direction: column;
  align-items: center;
  height: 210px;
  padding-top: 19px;
  border-radius: 5px;
  color: #4b4b4b;
  line-height: 22px;
}
.preset svg {
  margin-bottom: 2px;
  fill: none;
  stroke: #707070;
  stroke-width: 2.4;
  stroke-linecap: round;
  stroke-linejoin: round;
}
.preset .fine {
  stroke-width: 2;
}
.preset .solid {
  fill: #707070;
  stroke: none;
}
.preset b {
  font-size: 14px;
  font-weight: normal;
}
.preset small {
  color: #747474;
  font-size: 14px;
}
.selected {
  box-shadow: inset 0 0 0 4px #2680eb;
  outline: 1px dashed #1b6fd6;
}
.selected b {
  color: #000;
}
.hovered {
  background: #eaeaea;
}
.hovered b {
  color: #2b74d8;
}
.scrollbar {
  display: flex;
  flex-direction: column;
  justify-content: space-between;
  align-items: center;
  width: 20px;
  margin-bottom: 20px;
  padding: 8px 3px;
  background: #a9a9a9;
  color: #8a8a8a;
}
.up {
  transform: rotate(180deg);
}
.knob {
  flex: 1;
  width: 14px;
  margin: 36px 0 20px;
  border-radius: 1px;
  background: #858585;
}
.stock {
  display: flex;
  align-items: center;
  justify-content: center;
  height: 72px;
  margin: 0 33px 19px 32px;
  border-radius: 5px;
  background: #f4f4f4;
}
.stock input {
  width: 340px;
  height: 38px;
  margin: 0 13px 0 10px;
  padding: 0 2px 2px;
  border: 0;
  border-bottom: 1px solid #dcdcdc;
  background: none;
  color: #000;
  outline: 0;
}
.stock button,
.actions button {
  width: 90px;
  height: 40px;
  padding-bottom: 2px;
  border: 2px solid #6e6e6e;
  border-radius: 20px;
  color: #6e6e6e;
  font-size: 17px;
  font-weight: 500;
}

/* preset details */
.details {
  display: flex;
  flex-direction: column;
  width: 388px;
  padding: 20px 26px 25px 25px;
  background: #f5f5f5;
  color: #6e6e6e;
}
.details-title {
  line-height: 22px;
}
.name-row {
  display: flex;
  justify-content: space-between;
  align-items: flex-start;
  height: 63px;
  padding: 10px 0 0 2px;
}
.name-row input {
  width: 301px;
  height: 40px;
  padding: 0 1px 2px;
  border: 0;
  border-bottom: 1px solid #dcdcdc;
  background: none;
  color: #000;
}
.name-row button {
  margin-top: 3px;
}
.fields {
  display: flex;
  flex-direction: column;
  gap: 11px;
}
.line {
  display: flex;
  align-items: flex-end;
  gap: 15px;
}
.cell {
  display: flex;
  flex-direction: column;
  gap: 4px;
  line-height: 22px;
}
.short {
  width: 90px;
}
.short input {
  width: 90px;
  height: 40px;
  padding: 0 17px 2px;
  border: 1px solid #e0e0e0;
  border-radius: 5px;
  background: #fff;
  color: #000;
}
.wide {
  flex: 1;
}
.bits {
  width: 112px;
}
.pick {
  display: grid;
  align-items: center;
}
.pick select,
.pick svg {
  grid-area: 1 / 1;
}
.pick select {
  width: 100%;
  height: 40px;
  padding: 0 16px;
  border: 1px solid #e0e0e0;
  border-radius: 5px;
  background: #fafafa;
  color: #4b4b4b;
  font-size: 17px;
}
.pick svg {
  justify-self: end;
  margin-right: 15px;
}
.direction {
  width: 74px;
}
.ways {
  display: flex;
  align-items: center;
  gap: 8px;
  height: 40px;
}
.artboard input {
  appearance: none;
  width: 18px;
  height: 18px;
  margin: 11px 2px;
  border: 1px solid #a0a0a0;
  border-radius: 3px;
  background: #cacaca;
}
.bg-color {
  width: 40px;
  height: 40px;
  border: 1px solid #c9c9c9;
  border-radius: 4px;
  background: #fff;
}
.advanced {
  display: flex;
  align-items: center;
  gap: 4px;
  margin: 0 0 4px 1px;
  line-height: 22px;
}
.actions {
  display: flex;
  justify-content: flex-end;
  gap: 20px;
  margin-top: auto;
}
.actions .create {
  border-color: #1473e6;
  background: #1473e6;
  color: #fff;
}
.actions .close {
  border-color: #4b4b4b;
  color: #4b4b4b;
}
```
